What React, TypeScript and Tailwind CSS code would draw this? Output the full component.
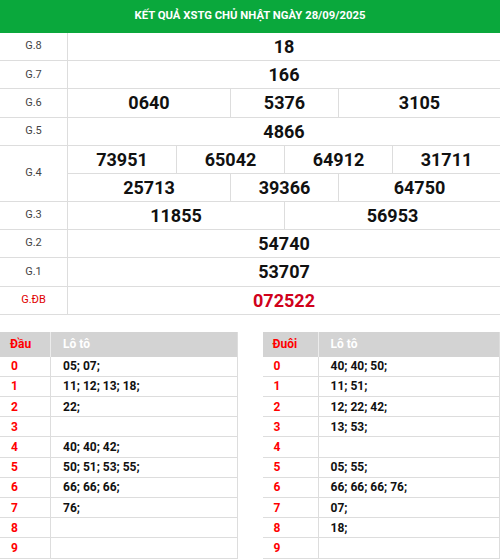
import React from 'react';

type Prize = { label: string; rows: { value: string; span: string }[][]; special?: boolean };

const prizes: Prize[] = [
  { label: 'G.8', rows: [[{ value: '18', span: 'col-span-8' }]] },
  { label: 'G.7', rows: [[{ value: '166', span: 'col-span-8' }]] },
  {
    label: 'G.6',
    rows: [[
      { value: '0640', span: 'col-span-3' },
      { value: '5376', span: 'col-span-2' },
      { value: '3105', span: 'col-span-3' },
    ]],
  },
  { label: 'G.5', rows: [[{ value: '4866', span: 'col-span-8' }]] },
  {
    label: 'G.4',
    rows: [
      [
        { value: '73951', span: 'col-span-2' },
        { value: '65042', span: 'col-span-2' },
        { value: '64912', span: 'col-span-2' },
        { value: '31711', span: 'col-span-2' },
      ],
      [
        { value: '25713', span: 'col-span-3' },
        { value: '39366', span: 'col-span-2' },
        { value: '64750', span: 'col-span-3' },
      ],
    ],
  },
  {
    label: 'G.3',
    rows: [[
      { value: '11855', span: 'col-span-4' },
      { value: '56953', span: 'col-span-4' },
    ]],
  },
  { label: 'G.2', rows: [[{ value: '54740', span: 'col-span-8' }]] },
  { label: 'G.1', rows: [[{ value: '53707', span: 'col-span-8' }]] },
  { label: 'G.ĐB', rows: [[{ value: '072522', span: 'col-span-8' }]], special: true },
];

const dau = ['05; 07;', '11; 12; 13; 18;', '22;', '', '40; 40; 42;', '50; 51; 53; 55;', '66; 66; 66;', '76;', '', ''];
const duoi = ['40; 40; 50;', '11; 51;', '12; 22; 42;', '13; 53;', '', '05; 55;', '66; 66; 66; 76;', '07;', '18;', ''];

function LotoTable({ head, items, firstCol }: { head: string; items: string[]; firstCol: string }) {
  return (
    <div className="flex-1 border-r border-[#dddddd]">
      <div className="flex h-[25px] bg-[#d3d3d3] text-[12px] font-bold">
        <div className={`${firstCol} flex items-center pl-[10px] border-r border-[#ececec] text-[#ff0000]`}>{head}</div>
        <div className="flex-1 flex items-center pl-[12px] text-white">Lô tô</div>
      </div>
      {items.map((v, i) => (
        <div key={i} className="flex h-[20.2px] border-b border-[#dddddd] text-[12px] font-bold">
          <div className={`${firstCol} flex items-center pl-[11px] border-r border-[#dddddd] text-[#ff0000]`}>{i}</div>
          <div className="flex-1 flex items-center pl-[12px] text-[#111111]">{v}</div>
        </div>
      ))}
    </div>
  );
}

export default function App() {
  return (
    <div className="w-[500px] bg-white font-['Roboto',sans-serif]">
      <div className="h-[33px] bg-[#0aa83c] flex items-center justify-center text-white text-[11.3px] font-bold">
        KẾT QUẢ XSTG CHỦ NHẬT NGÀY 28/09/2025
      </div>
      {prizes.map((p) => (
        <div key={p.label} className="flex border-b border-[#dddddd]">
          <div className={`w-[68px] shrink-0 flex items-center justify-center border-r border-[#dddddd] text-[11px] ${p.special ? 'text-[#e00000]' : 'text-[#444444]'}`}>
            {p.label}
          </div>
          <div className="flex-1">
            {p.rows.map((row, ri) => (
              <div key={ri} className={`grid grid-cols-8 ${ri > 0 ? 'h-[28px] border-t border-[#dddddd]' : 'h-[27.2px]'}`}>
                {row.map((c, ci) => (
                  <div
                    key={ci}
                    className={`${c.span} flex items-center justify-center text-[18px] font-bold ${ci > 0 ? 'border-l border-[#dddddd]' : ''} ${p.special ? 'text-[#d0011b]' : 'text-[#111111]'}`}
                  >
                    {c.value}
                  </div>
                ))}
              </div>
            ))}
          </div>
        </div>
      ))}
      <div className="flex gap-[25px] mt-[17px]">
        <LotoTable head="Đầu" items={dau} firstCol="w-[51px]" />
        <LotoTable head="Đuôi" items={duoi} firstCol="w-[56px]" />
      </div>
    </div>
  );
}
